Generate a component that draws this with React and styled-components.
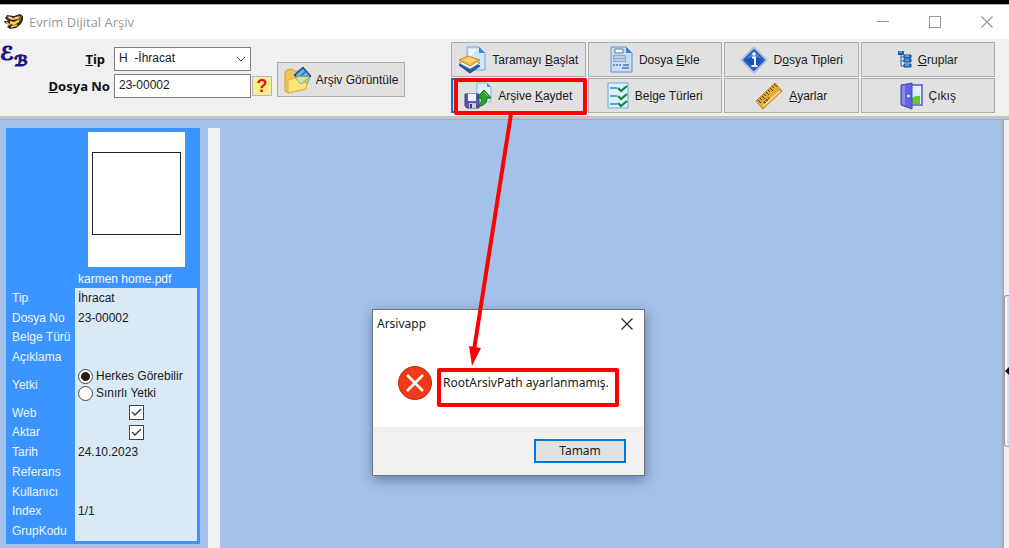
import React from 'react';
import styled, { createGlobalStyle } from 'styled-components';

const GlobalStyle = createGlobalStyle`
  *, *::before, *::after { box-sizing: border-box; }
  body { margin: 0; background: #a4c2e9; overflow: hidden; }
  button, input, select { font: inherit; color: inherit; margin: 0; padding: 0; }
`;

const Window = styled.div`
  position: relative;
  display: flex;
  flex-direction: column;
  min-height: 100vh;
  border-top: 4px solid #000;
  font-family: 'Liberation Sans', Arial, sans-serif;
  font-size: 12px;
  line-height: 16px;
  color: #1a1a1a;
`;

const TitleBar = styled.header`
  display: flex;
  align-items: center;
  height: 35px;
  padding-left: 4px;
  background: #fff;
  border-top: 1px solid #b4b4b4;
`;

const Title = styled.h1`
  flex: 1;
  margin: 0 0 0 5px;
  font: 400 13px/16px 'Open Sans', sans-serif;
  color: #999;
`;

const Caption = styled.div`
  display: flex;
  gap: 8px;
`;

const CaptionButton = styled.button`
  display: flex;
  align-items: center;
  justify-content: center;
  width: 44px;
  height: 30px;
  border: 0;
  background: none;
`;

const Toolbar = styled.div`
  display: flex;
  align-items: flex-start;
  height: 80px;
  padding-right: 14px;
  background: #f0f0f0;
  border-bottom: 3px solid #c3c3c3;
`;

const Logo = styled.div`
  display: flex;
  width: 30px;
  padding-top: 4px;
  font: italic 700 19px/20px 'DejaVu Serif', 'DejaVu Sans', serif;
  color: #17177f;
  -webkit-text-stroke: 1px #17177f;
`;

const LogoLow = styled.span`
  padding-top: 8px;
  font-size: 15px;
`;

const Fields = styled.div`
  display: grid;
  grid-template-columns: 83px 137px 20px;
  grid-auto-rows: 24px;
  row-gap: 3px;
  column-gap: 1px;
  align-items: center;
  padding-top: 8px;
`;

const FieldLabel = styled.label`
  padding-right: ${(p) => p.$inset || 0}px;
  text-align: right;
  font: 700 13px/16px 'Noto Sans', sans-serif;
  color: #111;
  margin-right: 3px;
`;

const SelectWrap = styled.div`
  position: relative;
  height: 24px;
  svg { position: absolute; right: 5px; top: 9px; pointer-events: none; }
`;

const Select = styled.select`
  appearance: none;
  width: 100%;
  height: 24px;
  padding: 0 20px 2px 4px;
  border: 1px solid #7f7f7f;
  border-radius: 0;
  background: #fff;
`;

const TextBox = styled.input`
  width: 100%;
  height: 24px;
  padding: 0 4px 2px;
  border: 1px solid #7f7f7f;
  border-radius: 0;
  background: #fff;
`;

const HelpButton = styled.button`
  width: 20px;
  height: 20px;
  border: 1px solid #b5b5b5;
  background: radial-gradient(circle, #fff27c 0 8px, #ece9d2 10px);
  color: #e8101c;
  font: 700 18px/18px 'Liberation Sans', sans-serif;
`;

const ToolButton = styled.button`
  display: flex;
  align-items: center;
  justify-content: center;
  gap: ${(p) => p.$gap || 6}px;
  height: 35px;
  border: 1px solid #adadad;
  background: #e1e1e1;
  white-space: nowrap;
  ${(p) => p.$active && 'border: 2px solid #0078d7;'}
  svg { flex: none; }
`;

const ViewButton = styled(ToolButton)`
  width: 128px;
  margin: 23px 0 0 5px;
`;

const Actions = styled.div`
  flex: 1;
  display: grid;
  grid-template-columns: repeat(4, 1fr);
  gap: 1px 2px;
  margin: 3px 0 0 46px;
`;

const Workspace = styled.main`
  flex: 1;
  display: flex;
  align-items: stretch;
  background: #a4c2e9;
  border-top: 1px solid #96aed2;
`;

const Sidebar = styled.aside`
  width: 208px;
  padding: 8px 8px 4px 6px;
`;

const Card = styled.section`
  padding: 4px 3px 3px 0;
  background: #3b94ff;
`;

const Preview = styled.figure`
  display: flex;
  flex-direction: column;
  margin: 0;
  color: #f4f9ff;
`;

const Page = styled.div`
  width: 97px;
  height: 135px;
  margin-left: 82px;
  padding: 20px 4px 31px;
  background: #fff;
`;

const PageFrame = styled.div`
  height: 83px;
  border: 1px solid #222;
`;

const FileName = styled.figcaption`
  padding: 4px 0 0 72px;
  height: 21px;
`;

const Properties = styled.div`
  display: grid;
  grid-template-columns: 69px 1fr;
  grid-template-rows: repeat(4, 1fr) 36px repeat(7, 1fr);
  height: 253px;
`;

const PropLabel = styled.span`
  display: flex;
  align-items: center;
  padding-left: 6px;
  color: #eaf4ff;
  white-space: nowrap;
`;

const PropValue = styled.div`
  display: flex;
  flex-direction: column;
  justify-content: center;
  align-items: ${(p) => (p.$center ? 'center' : 'flex-start')};
  padding-left: ${(p) => (p.$center ? 0 : 3)}px;
  background: #d9e9f6;
`;

const RadioLabel = styled.label`
  display: flex;
  align-items: center;
  gap: 3px;
  height: 17px;
  white-space: nowrap;
`;

const Radio = styled.input`
  appearance: none;
  width: 15px;
  height: 15px;
  border: 1px solid #444;
  border-radius: 50%;
  background: #fff;
  &:checked { background: radial-gradient(circle, #222 0 4px, #fff 5px); }
`;

const CheckWrap = styled.span`
  position: relative;
  display: flex;
  svg { position: absolute; left: 2px; top: 3px; pointer-events: none; }
`;

const CheckInput = styled.input`
  appearance: none;
  width: 15px;
  height: 15px;
  border: 1px solid #444;
  background: #fff;
`;

const Splitter = styled.div`
  width: 12px;
  margin-top: 8px;
  background: #f0f0f0;
`;

const Canvas = styled.div`
  flex: 1;
`;

const Rail = styled.div`
  width: 7px;
  padding-top: 175px;
  background: #f0f0f0;
  border-left: 2px solid #a5a9b0;
`;

const RailHandle = styled.button`
  display: flex;
  align-items: center;
  justify-content: flex-end;
  width: 5px;
  height: 152px;
  border: 1px solid #999;
  border-right: 0;
  border-radius: 3px 0 0 3px;
  background: linear-gradient(90deg, #fff 60%, #c7e2fa 60%);
`;

const Dialog = styled.section`
  position: absolute;
  left: 372px;
  top: 305px;
  width: 273px;
  border: 1px solid #6d7680;
  background: #fff;
  box-shadow: 1px 4px 12px rgba(20, 40, 80, 0.45);
  font: 400 12px/16px 'Noto Sans', 'Open Sans', sans-serif;
`;

const DialogHeader = styled.div`
  display: flex;
  align-items: center;
  justify-content: space-between;
  height: 28px;
  padding-left: 4px;
`;

const DialogClose = styled(CaptionButton)`
  width: 35px;
  height: 28px;
`;

const DialogBody = styled.div`
  display: flex;
  align-items: center;
  gap: 11px;
  height: 89px;
  padding-left: 25px;
  white-space: nowrap;
`;

const DialogFooter = styled.div`
  display: flex;
  justify-content: flex-end;
  height: 48px;
  padding: 12px 18px 0 0;
  background: #f0f0f0;
`;

const OkButton = styled.button`
  width: 92px;
  height: 24px;
  border: 2px solid #0078d7;
  background: #e1e1e1;
`;

const Annotation = styled.svg`
  position: absolute;
  left: 0;
  top: -4px;
  pointer-events: none;
`;

const CloseGlyph = ({ color = '#999' }) => (
  <svg width="12" height="12" viewBox="0 0 12 12">
    <path d="M0.5 0.5 11.5 11.5M11.5 0.5 0.5 11.5" stroke={color} strokeWidth="1.2" />
  </svg>
);

const AppIcon = () => (
  <svg width="20" height="16" viewBox="0 0 20 16">
    <path d="M3 1 10 2 16 0 19 2 19 6 17 10 12 14 6 15 3 13 5 11 1 9 0 7 4 7 1 4Z" fill="#3b2b16" />
    <path d="M3 2 9 4 16 2 15 5 9 6 5 5Z" fill="#e2bd83" />
    <path d="M6 7 10 8 16 5 15 8 10 11 6 10Z" fill="#ffdb28" />
    <path d="M2 8 6 11M7 13 13 11" stroke="#e8c795" strokeWidth="1.4" fill="none" />
    <path d="M5 3 8 4M11 4 14 3" stroke="#fff3c8" />
    <path d="M17 2 16 7" stroke="#8a6a3a" />
  </svg>
);

const FolderIcon = () => (
  <svg width="28" height="28" viewBox="0 0 28 28">
    <path d="M1 6 3 4 8 3 10 5 15 5 21 12 22 23 4 27 1 25Z" fill="#f0c552" stroke="#d09f30" />
    <path d="m10 9 9-8 8 9-8 8Z" fill="#2566ac" stroke="#184477" />
    <path d="m12 9 7-6 2 2-7 7ZM17 11l5-5 3 4-5 5Z" fill="#65b6e5" />
    <path d="m12 11 4-1 10 1-3 8-10 2Z" fill="#bcd79a" stroke="#7fa078" />
    <path d="M4 14 11 12 17 17 23 16 22 23 4 27Z" fill="#ffe477" stroke="#e0b044" />
    <path d="m11 12 6 6 9-7" fill="#d3e3a8" stroke="#8fae78" />
  </svg>
);

const ScanIcon = () => (
  <svg width="28" height="28" viewBox="0 0 28 28">
    <path d="M9 1h12l6 6v17H9Z" fill="#cfe6ff" stroke="#6fa5de" />
    <path d="M11 3h8l-8 9Z" fill="#f1f8ff" />
    <path d="M21 1v6h6Z" fill="#3f86e0" />
    <path d="M1 19 11 15l11 5-10 7Z" fill="#1e5ba8" stroke="#144481" />
    <path d="m1 17 10-4 11 4-10 6Z" fill="#fff" stroke="#7a94b4" />
    <path d="M1 14 10 10l12 4-10 6Z" fill="#f4b942" stroke="#d08c1c" />
    <path d="m4 14 7-3 7 3-6 3Z" fill="#ffd37a" />
  </svg>
);

const DocIcon = () => (
  <svg width="23" height="27" viewBox="0 0 23 27">
    <path d="M1 1h15l6 6v19H1Z" fill="#c4dffb" stroke="#5c90cb" />
    <path d="M16 1v6h6Z" fill="#3b7fd0" />
    <path d="M5 3h8v4H5Z" fill="#fff" stroke="#5e7998" />
    <path d="M3 9h13v7H3Z" fill="#8fa9c6" />
    <path d="M4 11h11M4 14h11" stroke="#e9f3ff" />
    <path d="M3 19h2M6 19h2M9 19h2M13 19h6M12 22h7" stroke="#54789e" strokeWidth="1.6" />
  </svg>
);

const InfoIcon = () => (
  <svg width="28" height="28" viewBox="0 0 28 28">
    <path d="M14 2 26 14 14 26 2 14Z" fill="#e4eaf4" stroke="#b4c0d4" strokeWidth="3" strokeLinejoin="round" />
    <path d="M14 4 24 14 14 24 4 14Z" fill="#1552c4" stroke="#2a62c4" strokeWidth="2" strokeLinejoin="round" />
    <path d="M14 5 22 13Q14 9 6 13Z" fill="#4b83df" />
    <path d="M12 11.5h3V20M11.5 20h6" stroke="#fff" strokeWidth="2" fill="none" />
    <circle cx="14" cy="8" r="1.7" fill="#fff" />
  </svg>
);

const TreeIcon = () => (
  <svg width="14" height="17" viewBox="0 0 14 17">
    <path d="M3 4v11h4M3 6h4M3 10h4" stroke="#34618f" fill="none" />
    <path d="M0 0h6v4H0Z" fill="#1e5bb0" />
    <path d="M6 4h7v3H6ZM6 8h7v3H6ZM6 13h7v3H6Z" fill="#2e78d0" stroke="#1b4f93" />
    <path d="M1 1h3M7 5h4M7 9h4M7 14h4" stroke="#8dc4fb" />
  </svg>
);

const SaveIcon = () => (
  <svg width="28" height="27" viewBox="0 0 28 27">
    <path d="M13 1h10l4 4v15H13Z" fill="#e0efff" stroke="#8db5e2" />
    <path d="M23 1v4h4Z" fill="#5b98df" />
    <path d="M1 12h14v14H3l-2-2Z" fill="#5a58b4" stroke="#403f8c" />
    <path d="M4 12h8v7H4Z" fill="#f5f5ff" />
    <path d="M5 21h7v5H5Z" fill="#cbcbe0" />
    <path d="M6 22h2v4H6Z" fill="#35347d" />
    <path d="m20 8 7 8h-4c0 5-4 9-10 8 4-2 5-4 4-8h-4Z" fill="#27a52c" stroke="#116518" />
    <path d="m20 10 4 4" stroke="#7fdc6f" />
  </svg>
);

const ChecklistIcon = () => (
  <svg width="22" height="27" viewBox="0 0 22 27">
    <path d="M1 1h20v25H1Z" fill="#dcefff" stroke="#6fa5da" />
    <path d="M3 6h7M3 14h7M3 22h7" stroke="#3384c8" strokeWidth="1.6" />
    <path d="m11 6 3 3 6-5M11 14l3 3 6-5M11 21l3 3 6-5" stroke="#14843b" strokeWidth="2.2" fill="none" />
  </svg>
);

const RulerIcon = () => (
  <svg width="28" height="28" viewBox="0 0 28 28">
    <path d="M1 19 20 1 27 9 8 27Z" fill="#e0aa3c" stroke="#b98122" strokeLinejoin="round" />
    <path d="M8 24 25 9" stroke="#f7d47c" strokeWidth="2" />
    <path d="m3 18 3 3M5 16l2 2M7 14l3 3M9 12l2 2M11 10l3 3M13 8l2 2M15 6l3 3M17 4l2 2M19 2l3 3" stroke="#553708" />
    <path d="m9 21 5-5" stroke="#704b12" strokeWidth="2" strokeDasharray="2 1" />
  </svg>
);

const DoorIcon = () => (
  <svg width="23" height="28" viewBox="0 0 23 28">
    <path d="M10 3h12v20H10Z" fill="#f2f3ff" stroke="#7b7ad0" strokeWidth="2" />
    <path d="M12 5h8v10h-8Z" fill="#d8f2ff" />
    <path d="M12 16q4-3 8-2v8h-8Z" fill="#5fcc22" />
    <path d="M1 3 12 1v26L1 23Z" fill="#6563da" stroke="#4a49b0" />
    <path d="M2 4 5 3v20l-3-1Z" fill="#8c8bf1" />
    <circle cx="8.5" cy="14" r="1.3" fill="#fff" />
  </svg>
);

const ErrorIcon = () => (
  <svg width="34" height="34" viewBox="0 0 34 34">
    <circle cx="17" cy="17" r="16.5" fill="#f03a17" stroke="#b92c12" />
    <path d="m9 9 16 16M25 9 9 25" stroke="#fff" strokeWidth="2.6" />
  </svg>
);

const CheckField = ({ label }) => (
  <CheckWrap>
    <CheckInput type="checkbox" defaultChecked aria-label={label} />
    <svg width="12" height="9" viewBox="0 0 12 9">
      <path d="m1 4 3 3 6-6" stroke="#333" strokeWidth="1.3" fill="none" />
    </svg>
  </CheckWrap>
);

const actions = [
  { icon: <ScanIcon />, text: <span>Taramayı <u>B</u>aşlat</span> },
  { icon: <DocIcon />, text: <span>Dosya <u>E</u>kle</span> },
  { icon: <InfoIcon />, text: <span>D<u>o</u>sya Tipleri</span> },
  { icon: <TreeIcon />, text: <span><u>G</u>ruplar</span> },
  { icon: <SaveIcon />, text: <span>Arşive <u>K</u>aydet</span>, active: true },
  { icon: <ChecklistIcon />, text: <span>Be<u>l</u>ge Türleri</span> },
  { icon: <RulerIcon />, text: <span><u>A</u>yarlar</span> },
  { icon: <DoorIcon />, text: <span>Çıkış</span> },
];

const properties = [
  ['Tip', 'İhracat'],
  ['Dosya No', '23-00002'],
  ['Belge Türü', ''],
  ['Açıklama', ''],
  ['Yetki', 'access'],
  ['Web', 'check'],
  ['Aktar', 'check'],
  ['Tarih', '24.10.2023'],
  ['Referans', ''],
  ['Kullanıcı', ''],
  ['Index', '1/1'],
  ['GrupKodu', ''],
];

const renderValue = (label, value) => {
  if (value === 'check') return <CheckField label={label} />;
  if (value === 'access') {
    return (
      <>
        <RadioLabel><Radio type="radio" name="access" defaultChecked />Herkes Görebilir</RadioLabel>
        <RadioLabel><Radio type="radio" name="access" />Sınırlı Yetki</RadioLabel>
      </>
    );
  }
  return value;
};

export default function App() {
  return (
    <Window>
      <GlobalStyle />
      <TitleBar>
        <AppIcon />
        <Title>Evrim Dijital Arşiv</Title>
        <Caption>
          <CaptionButton aria-label="Simge durumuna küçült">
            <svg width="12" height="12"><path d="M0 5.5h12" stroke="#999" /></svg>
          </CaptionButton>
          <CaptionButton aria-label="Ekranı kapla">
            <svg width="12" height="12"><rect x="0.5" y="0.5" width="11" height="11" fill="none" stroke="#999" /></svg>
          </CaptionButton>
          <CaptionButton aria-label="Kapat"><CloseGlyph /></CaptionButton>
        </Caption>
      </TitleBar>

      <Toolbar>
        <Logo>ℰ<LogoLow>ℬ</LogoLow></Logo>
        <Fields>
          <FieldLabel htmlFor="type" $inset={5}><u>T</u>ip</FieldLabel>
          <SelectWrap>
            <Select id="type" defaultValue="H">
              <option value="H">{'H\u00a0\u00a0-İhracat'}</option>
            </Select>
            <svg width="10" height="7"><path d="m1 1 4 4 4-4" stroke="#555" fill="none" /></svg>
          </SelectWrap>
          <span />
          <FieldLabel htmlFor="file-no"><u>D</u>osya No</FieldLabel>
          <TextBox id="file-no" defaultValue="23-00002" />
          <HelpButton>?</HelpButton>
        </Fields>
        <ViewButton $gap={4}><FolderIcon />Arşiv Görüntüle</ViewButton>
        <Actions>
          {actions.map((a, i) => (
            <ToolButton key={i} $active={a.active}>{a.icon}{a.text}</ToolButton>
          ))}
        </Actions>
      </Toolbar>

      <Workspace>
        <Sidebar>
          <Card>
            <Preview>
              <Page><PageFrame /></Page>
              <FileName>karmen home.pdf</FileName>
            </Preview>
            <Properties>
              {properties.map(([label, value]) => (
                <React.Fragment key={label}>
                  <PropLabel>{label}</PropLabel>
                  <PropValue $center={value === 'check'}>{renderValue(label, value)}</PropValue>
                </React.Fragment>
              ))}
            </Properties>
          </Card>
        </Sidebar>
        <Splitter />
        <Canvas />
        <Rail><RailHandle aria-label="Paneli aç">
          <svg width="4" height="8"><path d="M4 0v8L0 4Z" fill="#111" /></svg>
        </RailHandle></Rail>
      </Workspace>

      <Dialog role="dialog" aria-label="Arsivapp">
        <DialogHeader>
          Arsivapp
          <DialogClose aria-label="Kapat"><CloseGlyph color="#222" /></DialogClose>
        </DialogHeader>
        <DialogBody><ErrorIcon />RootArsivPath ayarlanmamış.</DialogBody>
        <DialogFooter><OkButton>Tamam</OkButton></DialogFooter>
      </Dialog>

      <Annotation width="700" height="420" viewBox="0 0 700 420">
        <g fill="none" stroke="#fe0000" strokeWidth="4" strokeLinejoin="round">
          <rect x="456" y="80" width="129" height="33" />
          <rect x="439" y="370" width="178" height="35" />
          <path d="M511 114 474 350" />
        </g>
        <path d="m469 346 12 2-9 18Z" fill="#fe0000" />
      </Annotation>
    </Window>
  );
}
